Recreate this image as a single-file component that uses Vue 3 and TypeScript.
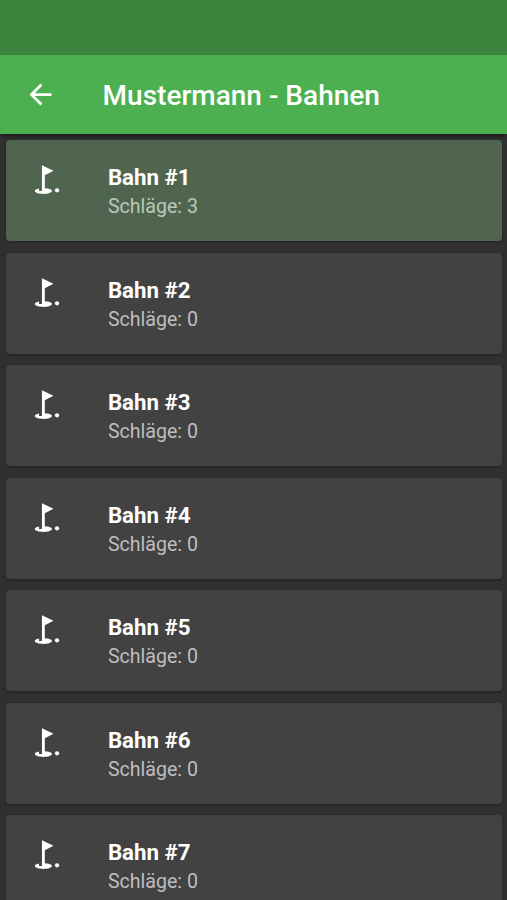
<script setup lang="ts">
interface Lane {
  id: number
  strokes: number
}

const lanes: Lane[] = [1, 2, 3, 4, 5, 6, 7].map((id) => ({ id, strokes: id === 1 ? 3 : 0 }))
</script>

<template>
  <div class="screen">
    <div class="status"></div>
    <header class="bar">
      <svg class="back" viewBox="0 0 24 24" aria-hidden="true">
        <path d="M20 11H7.83l5.59-5.59L12 4l-8 8 8 8 1.41-1.41L7.83 13H20v-2z" />
      </svg>
      <h1>Mustermann - Bahnen</h1>
    </header>
    <main class="list">
      <article v-for="lane in lanes" :key="lane.id" class="card" :class="{ played: lane.strokes > 0 }">
        <svg class="flag" viewBox="0 0 24 24" aria-hidden="true">
          <circle cx="19.5" cy="19.5" r="1.5" />
          <path d="M17 5.92L9 2v18H7v-1.73c-1.79.35-3 .99-3 1.73 0 1.1 2.69 2 6 2s6-.9 6-2c0-.99-2.16-1.81-5-1.97V8.98l6-3.06z" />
        </svg>
        <div class="text">
          <h2>Bahn #{{ lane.id }}</h2>
          <p>Schläge: {{ lane.strokes }}</p>
        </div>
      </article>
    </main>
  </div>
</template>

<style>
body {
  background: #303030;
  overflow: hidden;
}
</style>

<style scoped>
.screen {
  height: 900px;
  overflow: hidden;
  background: #303030;
  color: #fff;
  font-family: Roboto, sans-serif;
}
.status {
  height: 55.4px;
  background: #3b853e;
}
.bar {
  display: flex;
  align-items: center;
  box-sizing: border-box;
  height: 78.6px;
  padding: 3px 0 0 24px;
  background: #4caf50;
  box-shadow: 0 3px 4px -1px rgba(0, 0, 0, 0.5);
}
.back {
  width: 33px;
  height: 33px;
  margin: -3px 45.6px 0 0;
  fill: #fff;
}
h1 {
  margin: 0;
  font-size: 28px;
  line-height: 32px;
  font-weight: 500;
}
.list {
  display: flex;
  flex-direction: column;
  gap: 11.5px;
  padding: 6.25px 5.5px 0 6.4px;
}
.card {
  display: flex;
  box-sizing: border-box;
  flex: none;
  height: 101px;
  padding: 22px 0 0 22.6px;
  border-radius: 4px;
  background: #424242;
  box-shadow: 0 1px 3px rgba(0, 0, 0, 0.3);
}
.played {
  background: #506550;
}
.flag {
  width: 34.5px;
  height: 35px;
  margin-right: 44.4px;
  fill: #fff;
}
h2 {
  margin: 0;
  font-size: 22.3px;
  line-height: 30px;
  font-weight: 700;
}
p {
  margin: 1px 0 0;
  font-size: 19.6px;
  line-height: 27px;
  color: #bebebe;
}
.played p {
  color: #b9c8b9;
}
</style>
